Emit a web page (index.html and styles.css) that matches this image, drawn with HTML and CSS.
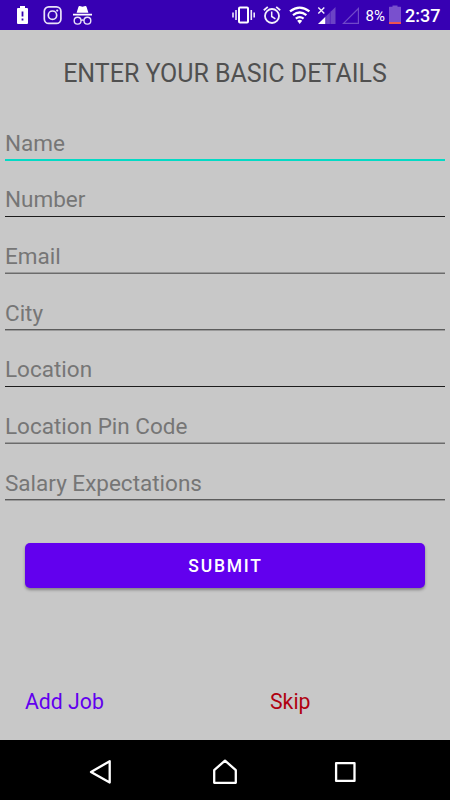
FILE: index.html
```html
<!DOCTYPE html>
<html lang="en">

<head>
    <meta charset="UTF-8">
    <meta name="viewport" content="width=device-width, initial-scale=1.0">
    <title>Basic Details</title>
    <link rel="stylesheet" href="styles.css">
</head>

<body>
    <header class="status-bar">
        <svg class="notifications" width="100" height="30" viewBox="0 0 100 30">
            <!-- Battery alert -->
            <path fill="#fff" fill-rule="evenodd" d="M20 6h5v2h2q1 0 1 1v14q0 1-1 1h-9q-1 0-1-1V9q0-1 1-1h2zM21.6 11.5v5h1.8v-5zM21.6 18.5v2h1.8v-2z"/>
            <!-- Instagram -->
            <g fill="none" stroke="#e9e3f8" stroke-width="1.7">
                <rect x="44.3" y="6.8" width="16.6" height="16.6" rx="4.5"/>
                <circle cx="52.5" cy="15.2" r="4.2"/>
            </g>
            <circle cx="57.2" cy="10.6" r="1.1" fill="#e9e3f8"/>
            <!-- Incognito -->
            <path fill="#fff" d="M76.6 12.8l1.8-5.9q.4-1 1.4-.8l2.7.6 2.7-.6q1-.2 1.4.8l1.8 5.9zM73 13.8h19v1.7H73z"/>
            <g fill="none" stroke="#e9e3f8" stroke-width="1.4">
                <circle cx="77.6" cy="20.7" r="3.4"/>
                <circle cx="87.4" cy="20.7" r="3.4"/>
                <path d="M81 20.5q1.4-.9 2.9 0"/>
            </g>
        </svg>
        <div class="system">
            <svg width="132" height="30" viewBox="230 0 132 30">
                <!-- Vibrate -->
                <rect x="239" y="7.5" width="9" height="15" rx="1" fill="none" stroke="#fff" stroke-width="2"/>
                <path d="M236 10v10M251.3 10v10M233 12.5v5M254.2 12.5v5" stroke="#eee9fa" stroke-width="1.6"/>
                <!-- Alarm -->
                <g fill="none" stroke="#f3effb" stroke-width="1.8">
                    <circle cx="272" cy="16" r="7"/>
                    <path d="M263.8 10.3l4-3.4M280.2 10.3l-4-3.4"/>
                    <path d="M271.7 11.5v5l3.7 2.3" stroke-width="1.5"/>
                </g>
                <!-- Wifi -->
                <g fill="none" stroke="#fff" stroke-width="2.3">
                    <path d="M290 11.4q9.7-7.6 19.4 0"/>
                    <path d="M293 15.1q6.7-5.2 13.4 0"/>
                    <path d="M295.8 18.6q3.9-3 7.8 0"/>
                </g>
                <path d="M297.2 20.7q2.5-1.9 5 0l-2.5 3.2z" fill="#fff"/>
                <!-- Mobile signal, both SIMs -->
                <path d="M335.5 7v17H318z" fill="#6b43c6"/>
                <path d="M325.5 16.7v7.3H318z" fill="#fff"/>
                <path d="M325.8 15v9M330.3 11v13" stroke="#4d1abb" stroke-width=".7"/>
                <path d="M318.3 7.5l6 6M324.3 7.5l-6 6" stroke="#f3effb" stroke-width="1.4"/>
                <path d="M358.4 8.5v14.9h-14.9z" fill="none" stroke="#7048c9" stroke-width="1.2"/>
            </svg>
            <span class="percent">8%</span>
            <svg class="battery" width="12" height="30" viewBox="0 0 12 30">
                <path d="M3.5 5.5h5v1.3h3q.5 0 .5.5V22H0V7.3q0-.5.5-.5h3z" fill="#7950ce"/>
                <path d="M0 22h12v1.5q0 .5-.5.5H.5q-.5 0-.5-.5z" fill="#ef5350"/>
            </svg>
            <span class="time">2:37</span>
        </div>
    </header>

    <main>
        <h1>ENTER YOUR BASIC DETAILS</h1>
        <form>
            <input class="field active" type="text" placeholder="Name">
            <input class="field" type="text" placeholder="Number">
            <input class="field line-up" type="text" placeholder="Email">
            <input class="field line-down" type="text" placeholder="City">
            <input class="field" type="text" placeholder="Location">
            <input class="field line-up" type="text" placeholder="Location Pin Code">
            <input class="field line-down" type="text" placeholder="Salary Expectations">
            <button class="submit" type="button">SUBMIT</button>
        </form>
        <div class="links">
            <a class="add-job">Add Job</a>
            <a class="skip">Skip</a>
        </div>
    </main>

    <nav class="nav-bar">
        <svg width="26" height="28" viewBox="0 0 26 28">
            <path d="M21.7 3.2v21.4L3 14z" fill="none" stroke="#fff" stroke-width="2.3" stroke-linejoin="round"/>
        </svg>
        <svg class="home" width="28" height="28" viewBox="0 0 28 28">
            <path d="M3.2 24.8V12.2L14 2.6l10.8 9.6v12.6z" fill="none" stroke="#fff" stroke-width="2.3" stroke-linejoin="round"/>
        </svg>
        <svg width="24" height="28" viewBox="0 0 24 28">
            <rect x="3.1" y="5.1" width="18.4" height="17.8" fill="none" stroke="#fff" stroke-width="2.3" stroke-linejoin="round"/>
        </svg>
    </nav>
</body>

</html>
```

FILE: styles.css
```css
* {
    box-sizing: border-box;
}

body {
    margin: 0;
    height: 800px;
    display: flex;
    flex-direction: column;
    overflow: hidden;
    background: #c8c8c8;
    font-family: Roboto, sans-serif;
}

svg {
    display: block;
    flex: none;
}

.status-bar {
    height: 30px;
    display: flex;
    justify-content: space-between;
    background: #3700b3;
    color: #fff;
}

.system {
    display: flex;
    width: 220px;
    line-height: 32px;
}

.percent {
    width: 23px;
    margin-left: 3.5px;
    margin-right: 0.5px;
    font-size: 15px;
    white-space: nowrap;
}

.time {
    margin-left: 4px;
    font-size: 18px;
    font-weight: 500;
}

main {
    flex: 1;
}

h1 {
    margin: 0;
    padding-top: 29px;
    height: 91px;
    font-size: 25px;
    line-height: 30px;
    font-weight: 400;
    letter-spacing: -0.03px;
    text-align: center;
    color: #505050;
}

form {
    display: flex;
    flex-direction: column;
    padding: 0 5px;
}

.field {
    height: 40px;
    margin: 0 0 17px;
    padding: 3px 0 0;
    border: none;
    border-radius: 0;
    outline: none;
    background: linear-gradient(#1c1c1c, #1c1c1c) bottom / 100% 1px no-repeat;
    font-family: inherit;
    font-size: 22.5px;
}

.field::placeholder {
    color: #767676;
    opacity: 1;
}

.field.active {
    margin-bottom: 16px;
    background-image: linear-gradient(#03dac5, #03dac5);
    background-size: 100% 2px;
}

/* underlines that fall between two pixel rows */
.field.line-up {
    margin-bottom: 17px;
    background-image: linear-gradient(#9a9a9a 50%, #6b6b6b 50%);
    background-size: 100% 2px;
}

.field.line-down {
    margin-bottom: 16px;
    background-image: linear-gradient(#5c5c5c 50%, #9a9a9a 50%);
    background-size: 100% 2px;
}

.submit {
    height: 45px;
    margin: 26px 20px 0;
    padding: 0 0 0 1px;
    border: none;
    border-radius: 5px;
    background: #6200ee;
    box-shadow: 0 2px 3px rgba(0, 0, 0, 0.35);
    color: #fff;
    font-family: inherit;
    font-size: 17.5px;
    font-weight: 500;
    letter-spacing: 1.75px;
}

.links {
    display: flex;
    padding: 99px 25px 0;
    font-size: 21.25px;
    line-height: 30px;
}

.add-job {
    width: 245px;
    color: #6200ee;
}

.skip {
    color: #b00010;
}

.nav-bar {
    height: 60px;
    display: flex;
    justify-content: space-between;
    align-items: center;
    padding: 4px 93px 0 88px;
    background: #000;
}

.home {
    margin-left: 3px;
}
```
